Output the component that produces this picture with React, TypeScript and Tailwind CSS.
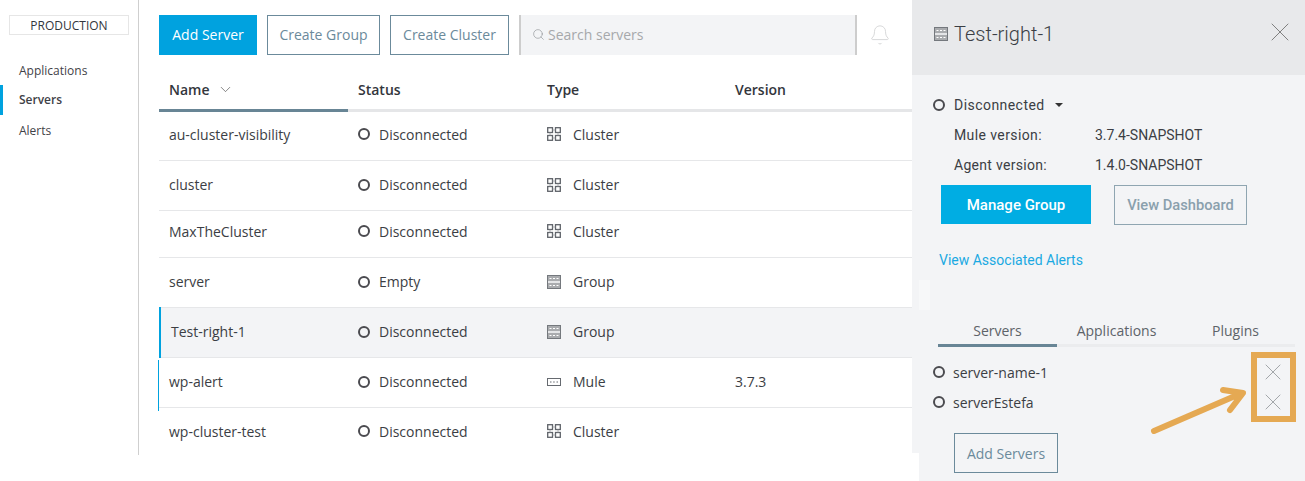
import React from 'react';
import { Bell, ChevronDown, Search, X } from 'lucide-react';

type Kind = 'Cluster' | 'Group' | 'Mule';

interface Row {
  name: string;
  status: string;
  type: Kind;
  version?: string;
  height: string;
  selected?: boolean;
  marked?: boolean;
}

const rows: Row[] = [
  { name: 'au-cluster-visibility', status: 'Disconnected', type: 'Cluster', height: 'h-[49px] pb-[4px] border-b' },
  { name: 'cluster', status: 'Disconnected', type: 'Cluster', height: 'h-[50px] pb-[2px] border-b' },
  { name: 'MaxTheCluster', status: 'Disconnected', type: 'Cluster', height: 'h-[47px] pb-[6px] border-b' },
  { name: 'server', status: 'Empty', type: 'Group', height: 'h-[50px] pb-[2px] border-b' },
  { name: 'Test-right-1', status: 'Disconnected', type: 'Group', height: 'h-[50px] pb-[2px] border-b', selected: true },
  { name: 'wp-alert', status: 'Disconnected', type: 'Mule', version: '3.7.3', height: 'h-[50px] pb-[2px] border-b', marked: true },
  { name: 'wp-cluster-test', status: 'Disconnected', type: 'Cluster', height: 'h-[48px] pb-[2px]' },
];

const Ring = () => <span className="block w-[12px] h-[12px] rounded-full border-2 border-[#4a4a4f] shrink-0" />;

const ClusterIcon = () => (
  <svg width="14" height="14" viewBox="0 0 14 14" fill="none" stroke="#5f6369" strokeWidth="1.3">
    <rect x="0.7" y="0.7" width="4.8" height="4.8" />
    <rect x="8.5" y="0.7" width="4.8" height="4.8" />
    <rect x="0.7" y="8.5" width="4.8" height="4.8" />
    <rect x="8.5" y="8.5" width="4.8" height="4.8" />
    <path d="M5.5 3h3M5.5 11h3M3 5.5v3M11 5.5v3" strokeWidth="0.8" stroke="#9a9da1" />
  </svg>
);

const GroupIcon = () => (
  <svg width="14" height="14" viewBox="0 0 14 14">
    <rect x="0.5" y="0.5" width="13" height="13" fill="#a9abae" stroke="#74787d" />
    <rect x="1" y="6" width="12" height="2" fill="#e4e5e7" />
    <path d="M2.5 3.5h2M6 3.5h2M9.5 3.5h2M2.5 10.5h2M6 10.5h2M9.5 10.5h2" stroke="#fff" strokeWidth="1" />
  </svg>
);

const MuleIcon = () => (
  <svg width="14" height="8" viewBox="0 0 14 8" fill="none">
    <rect x="0.5" y="0.5" width="13" height="7" stroke="#666a70" />
    <path d="M3 4h1.5M6.2 4h1.5M9.5 4h1.5" stroke="#666a70" />
  </svg>
);

const TypeIcon = ({ type }: { type: Kind }) => {
  if (type === 'Cluster') return <ClusterIcon />;
  if (type === 'Group') return <GroupIcon />;
  return <MuleIcon />;
};

const Sidebar = () => (
  <aside className="w-[139px] h-[455px] shrink-0 border-r border-[#cfcfcf] pt-[15px] text-[12px] text-[#3f4248]">
    <div className="mx-[9px] w-[120px] h-[20px] pt-[1px] border border-[#e6e6e6] flex items-center justify-center text-[#33363c]">
      PRODUCTION
    </div>
    <nav className="mt-[20px]">
      <div className="h-[30px] pl-[19px] pt-[2px] flex items-center">Applications</div>
      <div className="h-[30px] pl-[16px] flex items-center font-semibold border-l-[3px] border-[#00a2df]">Servers</div>
      <div className="h-[30px] pl-[19px] pt-[2px] flex items-center">Alerts</div>
    </nav>
  </aside>
);

const Toolbar = () => (
  <div className="flex items-center pl-[20px] pt-[15px] gap-[10px] text-[14px]">
    <button className="w-[98px] h-[40px] pb-[2px] bg-[#00a2df] text-white font-medium">Add Server</button>
    <button className="w-[113px] h-[40px] pb-[2px] border border-[#6b8a9b] text-[#6b8a9b]">Create Group</button>
    <button className="w-[119px] h-[40px] pb-[2px] border border-[#6b8a9b] text-[#6b8a9b]">Create Cluster</button>
    <div className="w-[338px] h-[40px] pb-[2px] bg-[#f3f4f6] border-x-2 border-[#cdcdcd] flex items-center pl-[11px] gap-[3px] text-[#a6a8ab]">
      <Search size={13} strokeWidth={1} className="text-[#7d8085]" />
      <span>Search servers</span>
    </div>
    <Bell size={22} strokeWidth={1} className="ml-[2px] text-[#d4d5d7]" />
  </div>
);

const Table = () => (
  <div className="mt-[18px] text-[14px] text-[#3b3e44]">
    <div className="ml-[20px] h-[39px] grid grid-cols-[189px_189px_188px_1fr] font-semibold text-[#33363c] border-b-[3px] border-[#e5e6e8]">
      <div className="pl-[10px] flex items-center gap-[7px] pb-[4px] border-b-[3px] border-[#688595] -mb-[3px]">
        Name <ChevronDown size={17} strokeWidth={1} className="text-[#555]" />
      </div>
      <div className="flex items-center pb-[4px] pl-[10px]">Status</div>
      <div className="flex items-center pb-[4px] pl-[10px]">Type</div>
      <div className="flex items-center pb-[4px] pl-[10px]">Version</div>
    </div>
    {rows.map((row) => (
      <div
        key={row.name}
        className={`${row.height} relative ml-[20px] grid grid-cols-[189px_189px_188px_1fr] items-center border-[#e6e7e9] ${
          row.selected ? 'bg-[#f3f4f6]' : ''
        }`}
      >
        {row.selected && <span className="absolute left-0 -top-[1px] w-[2px] h-[51px] bg-[#00a2df]" />}
        {row.marked && <span className="absolute -left-[1px] top-[2px] w-[1px] h-[51px] bg-[#00a2df]" />}
        <div className={row.selected ? 'pl-[12px]' : 'pl-[10px]'}>{row.name}</div>
        <div className="flex items-center gap-[9px] pl-[10px]">
          <Ring />
          {row.status}
        </div>
        <div className="flex items-center gap-[12px] pl-[10px]">
          <span className="w-[14px] flex justify-center">
            <TypeIcon type={row.type} />
          </span>
          {row.type}
        </div>
        <div className="pl-[10px]">{row.version}</div>
      </div>
    ))}
  </div>
);

const Panel = () => (
  <aside className="relative w-[393px] h-[481px] shrink-0 bg-[#f3f4f6] text-[#3b3e44] font-['Roboto',sans-serif] text-[14px]">
    <header className="h-[75px] bg-[#e8e9eb] flex items-center pl-[22px] pr-[0px] pb-[8px]">
      <GroupIcon />
      <h2 className="ml-[6px] text-[20px] font-light text-[#3b3e44]">Test-right-1</h2>
      <X size={32} strokeWidth={0.7} className="ml-auto mr-[9px] mb-[3px] text-[#777]" />
    </header>
    <div className="pl-[21px] pt-[20px]">
      <div className="h-[20px] flex items-center gap-[9px] tracking-[0.45px]">
        <Ring />
        Disconnected
        <span className="ml-[1px] w-0 h-0 border-x-[4px] border-x-transparent border-t-[4px] border-t-[#333]" />
      </div>
      <div className="ml-[21px] mt-[10px] h-[20px] flex items-center">
        <span className="w-[141px] tracking-[0.4px]">Mule version:</span>3.7.4-SNAPSHOT
      </div>
      <div className="ml-[21px] mt-[10px] h-[20px] flex items-center">
        <span className="w-[141px] tracking-[0.3px]">Agent version:</span>1.4.0-SNAPSHOT
      </div>
      <div className="ml-[8px] mt-[10px] flex gap-[23px]">
        <button className="w-[150px] h-[39px] pt-[2px] bg-[#00ade3] text-white text-[15px] font-medium">Manage Group</button>
        <button className="w-[133px] h-[40px] pt-[1px] border border-[#8fa5b1] text-[#8aa0ad] text-[14.7px] font-medium">View Dashboard</button>
      </div>
      <a className="block ml-[6px] mt-[25px] text-[#1aa9e2]">View Associated Alerts</a>
    </div>
    <div className="ml-[26px] mr-[10px] mt-[49px] grid grid-cols-3 border-b-[3px] border-[#ebecee] h-[27px] font-['Open_Sans',sans-serif] text-[#5d6369]">
      <div className="text-center border-b-[3px] border-[#688595] h-[27px]">Servers</div>
      <div className="text-center">Applications</div>
      <div className="text-center">Plugins</div>
    </div>
    <div className="pl-[21px] font-['Open_Sans',sans-serif] mt-[10px]">
      <div className="h-[30px] flex items-center gap-[8px]">
        <Ring />
        server-name-1
        <X size={28} strokeWidth={0.65} className="ml-auto mr-[18px] text-[#8a8d91]" />
      </div>
      <div className="h-[30px] flex items-center gap-[8px]">
        <Ring />
        serverEstefa
        <X size={28} strokeWidth={0.65} className="ml-auto mr-[18px] text-[#8a8d91]" />
      </div>
      <button className="ml-[21px] mt-[16px] w-[104px] h-[40px] border border-[#6b8a9b] text-[#6b8a9b]">Add Servers</button>
    </div>
    {/* annotation over the list */}
    <div className="absolute left-[339px] top-[352px] w-[45px] h-[70px] border-[6px] border-[#e5a953]" />
    <svg className="absolute left-[230px] top-[380px]" width="110" height="60" viewBox="0 0 110 60" fill="none">
      <path d="M12 51L100 13M81 10L101 13L88 30" stroke="#e5a953" strokeWidth="6" strokeLinecap="round" strokeLinejoin="round" />
    </svg>
    <div className="absolute left-[7px] top-[280px] w-[11px] h-[30px] bg-[#f7f8f9]" />
    <div className="absolute left-0 top-[453px] w-[7px] h-[28px] bg-white" />
  </aside>
);

export default function App() {
  return (
    <div className="w-[1305px] h-[481px] overflow-hidden flex bg-white font-['Open_Sans',sans-serif]">
      <Sidebar />
      <main className="flex-1 min-w-0">
        <Toolbar />
        <Table />
      </main>
      <Panel />
    </div>
  );
}
